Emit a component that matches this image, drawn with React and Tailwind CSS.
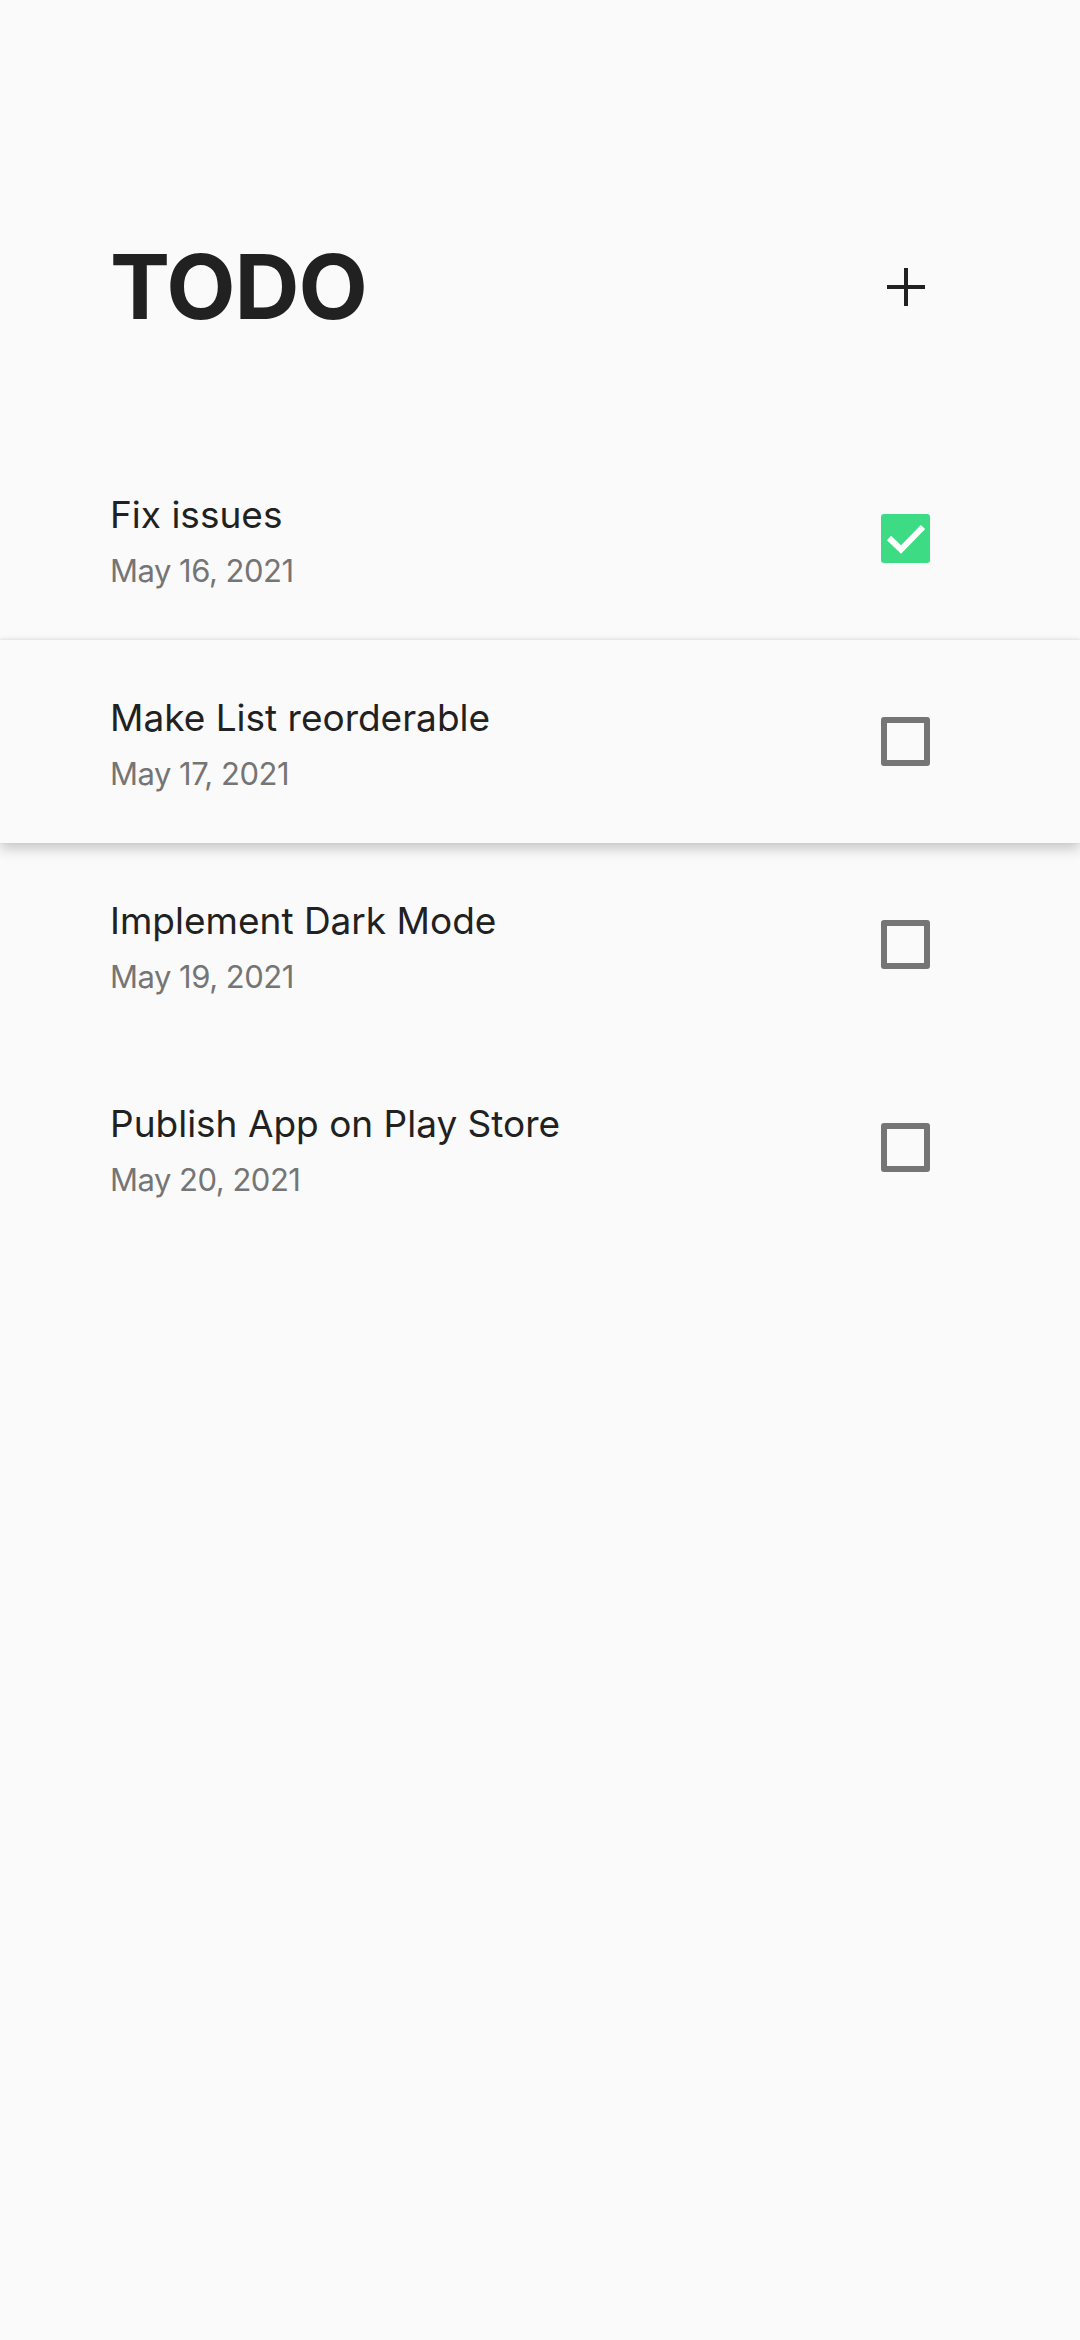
import { useState } from "react";

const todos = [
  { id: 1, title: "Fix issues", date: "May 16, 2021", done: true },
  { id: 2, title: "Make List reorderable", date: "May 17, 2021", done: false, lifted: true },
  { id: 3, title: "Implement Dark Mode", date: "May 19, 2021", done: false },
  { id: 4, title: "Publish App on Play Store", date: "May 20, 2021", done: false },
];

const Checkbox = ({ checked, onClick }) => (
  <button onClick={onClick} className="w-[49px] h-[49px] flex items-center justify-center">
    {checked ? (
      <div className="w-[49px] h-[49px] rounded-[3px] bg-[#3ddc84] flex items-center justify-center">
        <svg width="49" height="49" viewBox="0 0 49 49">
          <polyline points="8,24 20,35.5 42,13" fill="none" stroke="#ffffff" strokeWidth="6" />
        </svg>
      </div>
    ) : (
      <div className="w-[49px] h-[49px] rounded-[3px] border-[6px] border-[#757575]" />
    )}
  </button>
);

export default function App() {
  const [items, setItems] = useState(todos);

  const toggle = (id) =>
    setItems(items.map((t) => (t.id === id ? { ...t, done: !t.done } : t)));

  return (
    <div className="min-h-[2340px] bg-[#fafafa] font-['Inter',sans-serif]">
      <div className="h-[214px]" />
      <div className="h-[146px] pl-[110px] pr-[150px] flex items-center justify-between">
        <h1 className="text-[90px] leading-none font-bold text-[#212121] tracking-[-1px]">TODO</h1>
        <button className="w-[49px] h-[49px] flex items-center justify-center">
          <svg width="38" height="38" viewBox="0 0 38 38">
            <path d="M19 0v38M0 19h38" stroke="#212121" strokeWidth="4" />
          </svg>
        </button>
      </div>
      <div className="h-[77px]" />
      <div className="flex flex-col">
        {items.map((t) => (
          <div
            key={t.id}
            className={`h-[203px] pl-[110px] pr-[150px] flex items-center justify-between bg-[#fafafa] ${
              t.lifted
                ? "relative z-10 shadow-[0_-1px_3px_rgba(0,0,0,0.08),0_6px_12px_rgba(0,0,0,0.2)]"
                : ""
            }`}
          >
            <div className="pt-[6px] flex flex-col gap-[10px]">
              <span className="text-[37px] leading-[48px] text-[#212121]">{t.title}</span>
              <span className="text-[31px] leading-[44px] tracking-[-0.5px] text-[#757575]">{t.date}</span>
            </div>
            <Checkbox checked={t.done} onClick={() => toggle(t.id)} />
          </div>
        ))}
      </div>
    </div>
  );
}
